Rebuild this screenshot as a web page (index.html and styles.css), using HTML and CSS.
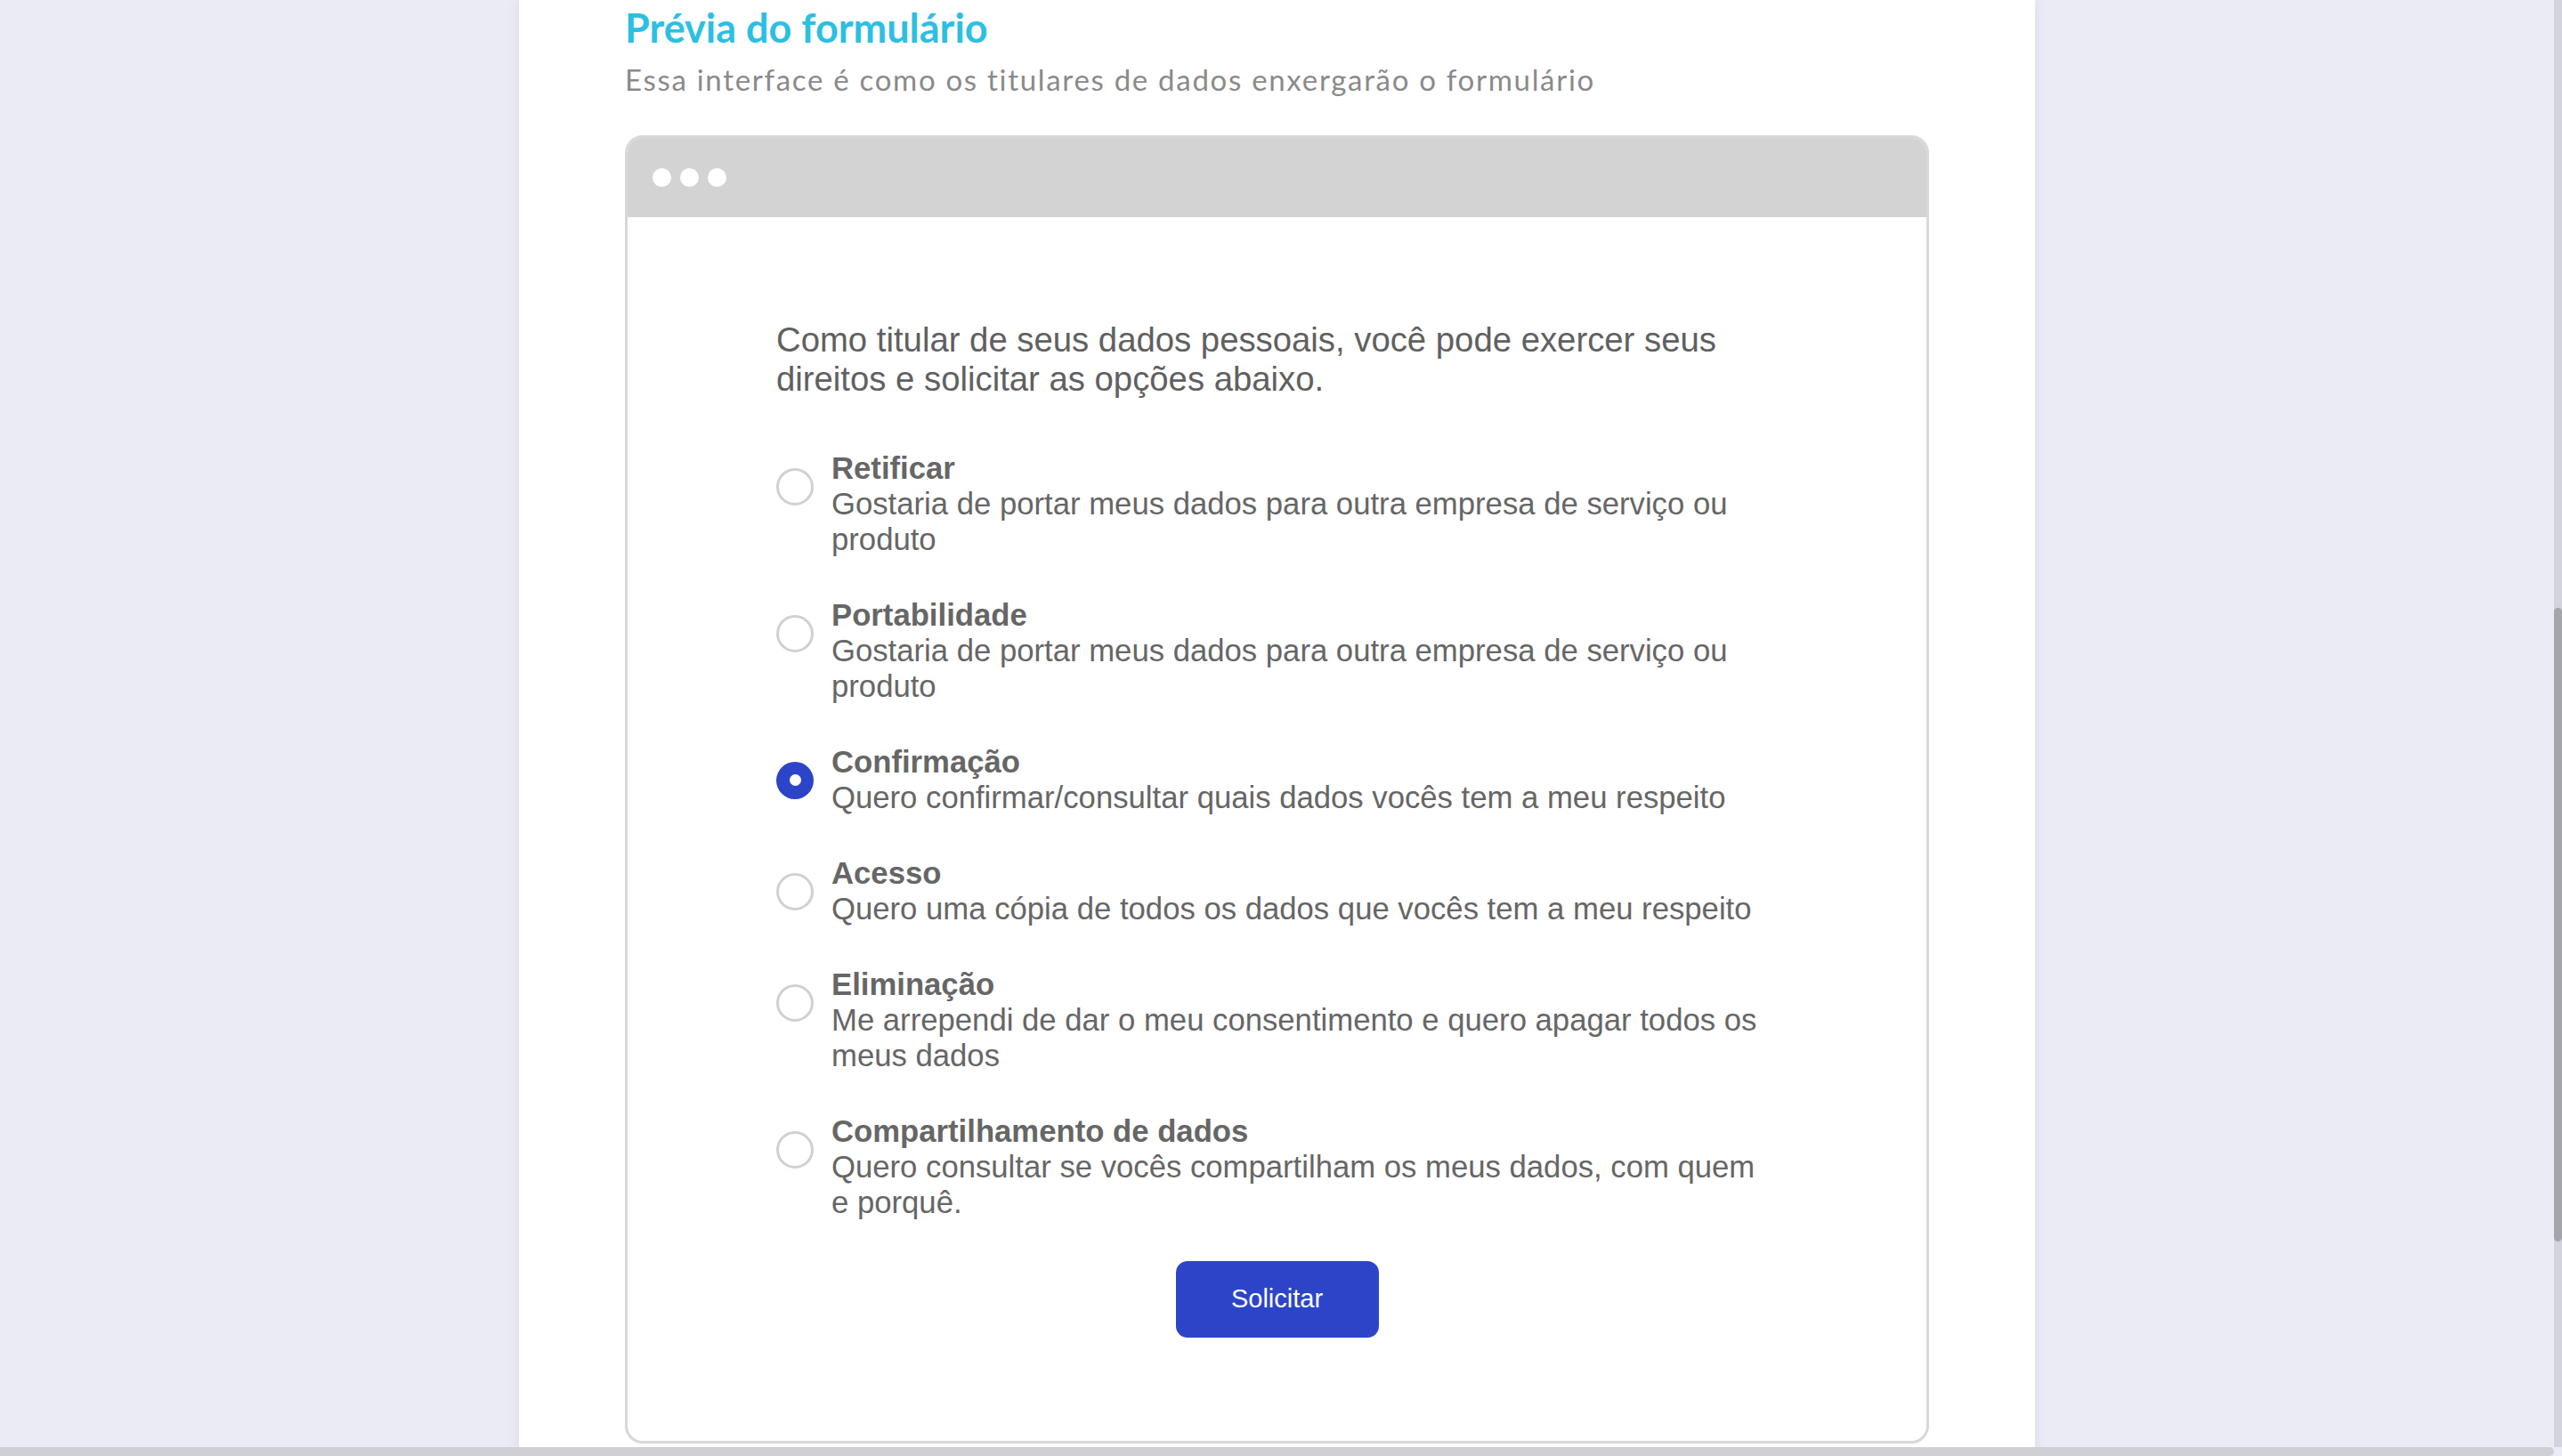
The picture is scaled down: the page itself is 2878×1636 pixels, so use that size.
FILE: index.html
```html
<!DOCTYPE html>
<html lang="pt-BR">
<head>
<meta charset="utf-8">
<title>Prévia do formulário</title>
<link rel="stylesheet" href="styles.css">
</head>
<body>
<div class="page">
  <main class="card">
    <h1 class="title">Prévia do formulário</h1>
    <p class="subtitle">Essa interface é como os titulares de dados enxergarão o formulário</p>
    <section class="browser">
      <div class="browser-bar">
        <span class="dot"></span><span class="dot"></span><span class="dot"></span>
      </div>
      <div class="browser-body">
        <form class="form">
          <p class="intro">Como titular de seus dados pessoais, você pode exercer seus direitos e solicitar as opções abaixo.</p>
          <ul class="options">
            <li class="option">
              <span class="radio"></span>
              <div class="option-text"><strong class="option-title">Retificar</strong><span class="option-desc">Gostaria de portar meus dados para outra empresa de serviço ou produto</span></div>
            </li>
            <li class="option">
              <span class="radio"></span>
              <div class="option-text"><strong class="option-title">Portabilidade</strong><span class="option-desc">Gostaria de portar meus dados para outra empresa de serviço ou produto</span></div>
            </li>
            <li class="option">
              <span class="radio checked"></span>
              <div class="option-text"><strong class="option-title">Confirmação</strong><span class="option-desc">Quero confirmar/consultar quais dados vocês tem a meu respeito</span></div>
            </li>
            <li class="option">
              <span class="radio"></span>
              <div class="option-text"><strong class="option-title">Acesso</strong><span class="option-desc">Quero uma cópia de todos os dados que vocês tem a meu respeito</span></div>
            </li>
            <li class="option">
              <span class="radio"></span>
              <div class="option-text"><strong class="option-title">Eliminação</strong><span class="option-desc">Me arrependi de dar o meu consentimento e quero apagar todos os meus dados</span></div>
            </li>
            <li class="option">
              <span class="radio"></span>
              <div class="option-text"><strong class="option-title">Compartilhamento de dados</strong><span class="option-desc">Quero consultar se vocês compartilham os meus dados, com quem e porquê.</span></div>
            </li>
          </ul>
          <button type="button" class="submit">Solicitar</button>
        </form>
      </div>
    </section>
  </main>
</div>
<div class="scroll-v"><div class="scroll-thumb"></div></div>
<div class="scroll-h"></div>
</body>
</html>
```

FILE: styles.css
```css
html, body {
  margin: 0;
  height: 100%;
}

body {
  background: #ebebf5;
  overflow: hidden;
  font-family: "Liberation Sans", Arial, sans-serif;
}

.page {
  width: 2869px;
  height: 1636px;
}

.card {
  width: 1703px;
  min-height: 1700px;
  margin: 0 auto;
  box-sizing: border-box;
  padding: 4px 119px 0;
  background: #ffffff;
  box-shadow: 0 0 14px rgba(40, 40, 90, 0.08);
}

.title {
  margin: 0;
  font-family: Lato, "Open Sans", sans-serif;
  font-weight: 700;
  font-size: 45px;
  line-height: 1.2;
  color: #2cbfe3;
}

.subtitle {
  margin: 12px 0 0;
  font-family: Lato, "Open Sans", sans-serif;
  font-size: 33px;
  letter-spacing: 1.7px;
  line-height: 1.2;
  color: #8a8a8a;
}

.browser {
  margin-top: 42px;
  border: 3px solid #d8d8d8;
  border-radius: 20px;
  overflow: hidden;
}

.browser-bar {
  height: 89px;
  background: #d3d3d3;
  display: flex;
  align-items: center;
  gap: 10px;
  padding-left: 28px;
}

.dot {
  width: 21px;
  height: 21px;
  border-radius: 50%;
  background: #ffffff;
}

.browser-body {
  padding: 116px 0 116px;
}

.form {
  width: 1125px;
  margin: 0 auto;
  display: flex;
  flex-direction: column;
}

.intro {
  margin: 0;
  font-size: 38.3px;
  line-height: 44px;
  color: #606060;
}

.options {
  list-style: none;
  margin: 58px 0 0;
  padding: 0;
  display: flex;
  flex-direction: column;
  gap: 45px;
}

.option {
  display: flex;
  align-items: flex-start;
  gap: 20px;
  font-size: 34.7px;
  line-height: 40px;
  color: #666666;
}

.radio {
  flex: none;
  width: 42px;
  height: 42px;
  box-sizing: border-box;
  margin-top: 20px;
  border: 3px solid #d0d0d0;
  border-radius: 50%;
}

.radio.checked {
  border: none;
  background: #2c45c8;
  display: flex;
  align-items: center;
  justify-content: center;
}

.radio.checked::after {
  content: "";
  width: 13px;
  height: 13px;
  border-radius: 50%;
  background: #ffffff;
}

.option-title {
  display: block;
  font-weight: 700;
}

.option-desc {
  display: block;
}

.submit {
  align-self: center;
  margin-top: 46px;
  width: 228px;
  height: 86px;
  border: none;
  border-radius: 13px;
  background: #2c45c8;
  color: #ffffff;
  font-family: "Liberation Sans", Arial, sans-serif;
  font-size: 29px;
}

.scroll-v {
  position: fixed;
  top: 0;
  right: 0;
  width: 9px;
  height: 1626px;
  background: #d3d3dc;
}

.scroll-thumb {
  margin-top: 683px;
  height: 712px;
  border-radius: 5px;
  background: #a4a4ab;
}

.scroll-h {
  position: fixed;
  left: 0;
  bottom: 0;
  width: 2869px;
  height: 10px;
  border-radius: 0 5px 5px 0;
  background: #cfcfd6;
}
```
